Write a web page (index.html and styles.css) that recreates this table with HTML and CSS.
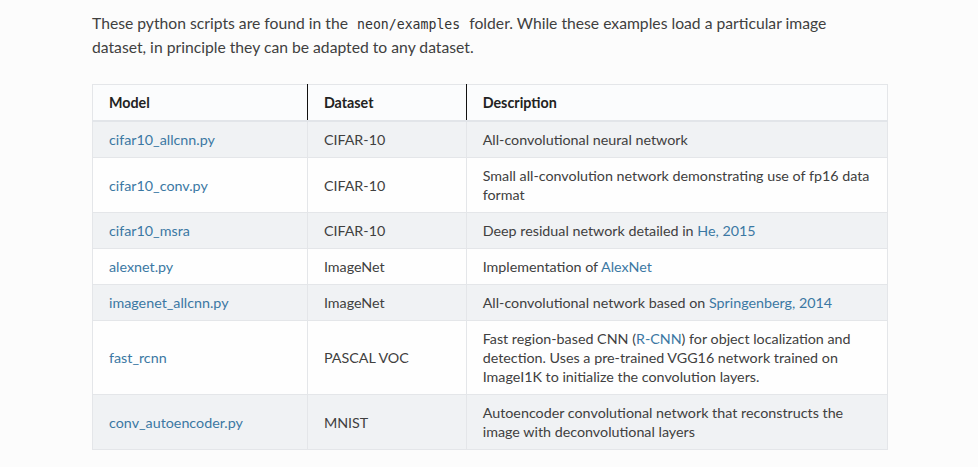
FILE: index.html
```html
<!DOCTYPE html>
<html>
<head>
<meta charset="utf-8">
<link rel="stylesheet" href="styles.css">
</head>
<body>
<div class="page">
  <p class="intro">These python scripts are found in the <code>neon/examples</code> folder. While these examples load a particular image dataset, in principle they can be adapted to any dataset.</p>
  <table class="models">
    <colgroup>
      <col class="c1"><col class="c2"><col class="c3">
    </colgroup>
    <thead>
      <tr><th>Model</th><th>Dataset</th><th>Description</th></tr>
    </thead>
    <tbody>
      <tr><td><a href="#">cifar10_allcnn.py</a></td><td>CIFAR-10</td><td>All-convolutional neural network</td></tr>
      <tr><td><a href="#">cifar10_conv.py</a></td><td>CIFAR-10</td><td>Small all-convolution network demonstrating use of fp16 data format</td></tr>
      <tr><td><a href="#">cifar10_msra</a></td><td>CIFAR-10</td><td>Deep residual network detailed in <a href="#">He, 2015</a></td></tr>
      <tr><td><a href="#">alexnet.py</a></td><td>ImageNet</td><td>Implementation of <a href="#">AlexNet</a></td></tr>
      <tr><td><a href="#">imagenet_allcnn.py</a></td><td>ImageNet</td><td>All-convolutional network based on <a href="#">Springenberg, 2014</a></td></tr>
      <tr><td><a href="#">fast_rcnn</a></td><td>PASCAL VOC</td><td>Fast region-based CNN (<a href="#">R-CNN</a>) for object localization and detection. Uses a pre-trained VGG16 network trained on ImageI1K to initialize the convolution layers.</td></tr>
      <tr><td><a href="#">conv_autoencoder.py</a></td><td>MNIST</td><td>Autoencoder convolutional network that reconstructs the image with deconvolutional layers</td></tr>
    </tbody>
  </table>
</div>
</body>
</html>
```
FILE: styles.css
```css
html, body {
  margin: 0;
  padding: 0;
  background: #fcfcfc;
}
body {
  font-family: Lato, "Open Sans", sans-serif;
  color: #404040;
}
.page {
  padding: 11px 0 0 92px;
  width: 796px;
}
.intro {
  margin: 0 0 25px 0;
  max-width: 770px;
  font-size: 15.7px;
  line-height: 24px;
  color: #404040;
}
.intro code {
  font-family: "DejaVu Sans Mono", monospace;
  font-size: 13.2px;
  line-height: 1;
  color: #333;
  padding: 0 5px;
}
.models {
  width: 796px;
  border-collapse: collapse;
  border: 1px solid #e4e6e9;
  font-size: 14.3px;
  line-height: 19px;
}
.c1 { width: 215px; }
.c2 { width: 159px; }
.c3 { width: 422px; }
.models th {
  text-align: left;
  font-weight: 700;
  color: #222;
  background: #fbfcfd;
  padding: 8px 16px;
  height: 18px;
  border-bottom: 2px solid #e2e5e9;
  border-left: 1px solid #111;
}
.models th:first-child { border-left: 1px solid #e4e6e9; }
.models td {
  padding: 8px 16px;
  vertical-align: middle;
  border-top: 1px solid #e4e6e9;
  border-left: 1px solid #e4e6e9;
  color: #404040;
}
.models tbody tr:nth-child(odd) td { background: #f0f2f4; }
.models tbody tr:nth-child(even) td { background: #fefefe; }
.models a {
  color: #3b78a3;
  text-decoration: none;
}
```
